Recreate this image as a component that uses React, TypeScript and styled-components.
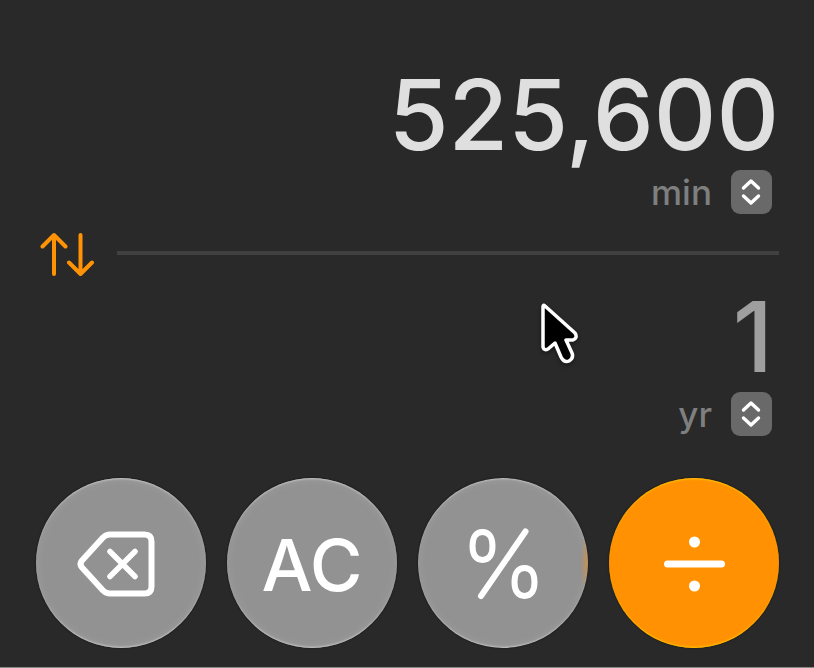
import React, { useState } from "react";
import styled, { createGlobalStyle, css } from "styled-components";

const GlobalStyle = createGlobalStyle`
  *, *::before, *::after {
    box-sizing: border-box;
  }

  body {
    margin: 0;
    background-color: #292929;
    font-family: Inter, "Liberation Sans", sans-serif;
  }
`;

const Calculator = styled.main`
  display: flex;
  flex-direction: column;
  min-height: 100vh;
  padding: 65px 35px 19px 36px;
  border-bottom: 1px solid #8a8a8a;
  background-color: #292929;
`;

const Panel = styled.section`
  position: relative;
  display: flex;
  flex-direction: column;
  align-items: flex-end;
  gap: 5px;
`;

const Value = styled.output<{ $dimmed?: boolean }>`
  font-size: 97px;
  font-weight: 500;
  line-height: 100px;
  color: ${({ $dimmed }) => ($dimmed ? "#9f9f9f" : "#dfdfdf")};
  padding-right: ${({ $dimmed }) => ($dimmed ? "6px" : "0")};
`;

const UnitPicker = styled.label`
  position: relative;
  display: flex;
  height: 44px;
  margin-right: 7px;
`;

const UnitSelect = styled.select`
  appearance: none;
  height: 44px;
  padding: 0 60px 0 0;
  border: none;
  background: transparent;
  color: #7f7f7f;
  font-family: inherit;
  font-size: 35px;
  font-weight: 500;
  line-height: 44px;
  text-align: right;
  cursor: pointer;
`;

const Stepper = styled.span`
  position: absolute;
  top: 0;
  right: 0;
  display: flex;
  align-items: center;
  justify-content: center;
  width: 41px;
  height: 44px;
  border-radius: 9px;
  background-color: #696969;
  pointer-events: none;
`;

const SwapRow = styled.div`
  display: flex;
  align-items: center;
  gap: 17px;
  height: 68px;
  margin-top: 5px;
`;

const SwapButton = styled.button`
  display: flex;
  padding: 0;
  border: none;
  background: none;
  color: #ff9305;
  cursor: pointer;
`;

const Divider = styled.hr`
  flex: 1;
  height: 4px;
  margin: 0;
  border: none;
  background-color: #404040;
`;

const Pointer = styled.svg`
  position: absolute;
  top: 13px;
  right: 194px;
  filter: drop-shadow(0 2px 2px rgba(0, 0, 0, 0.4));
`;

const Keypad = styled.div`
  display: grid;
  grid-template-columns: repeat(4, 1fr);
  gap: 21px;
  margin-top: 42px;
`;

const grayKey = css`
  background-color: #929292;
  box-shadow:
    inset 0 2px 2px -1px #c4c4c4,
    inset 0 -2px 2px -1px #c4c4c4,
    inset 0 0 12px rgba(255, 255, 255, 0.1),
    0 0 2px #111;
`;

const orangeKey = css`
  background-color: #ff9102;
  box-shadow:
    inset 0 2px 2px -1px #ffc400,
    inset 0 -2px 2px -1px #ffc400,
    0 0 2px #111;
`;

const Key = styled.button<{ $operator?: boolean; $glow?: boolean }>`
  display: flex;
  align-items: center;
  justify-content: center;
  aspect-ratio: 1;
  padding: 0;
  border: none;
  border-radius: 50%;
  color: #fff;
  font-family: inherit;
  font-size: 72px;
  font-weight: 500;
  line-height: 80px;
  cursor: pointer;
  ${({ $operator }) => ($operator ? orangeKey : grayKey)}
  ${({ $glow }) =>
    $glow &&
    css`
      background-image: radial-gradient(
        ellipse 8px 34px at 100% 50%,
        #c48b4c,
        transparent
      );
    `}
`;

const KeyText = styled.span`
  padding-top: 4px;
`;

const StepperIcon = () => (
  <svg width="22" height="28" viewBox="0 0 22 28" fill="none" stroke="#fff" strokeWidth="3.4" strokeLinecap="round" strokeLinejoin="round" aria-hidden="true">
    <path d="m2.500 10 7.500-7 7.500 7" />
    <path d="m2.500 18 7.500 7 7.500-7" />
  </svg>
);

const SwapIcon = () => (
  <svg width="64" height="48" viewBox="0 0 64 48" fill="none" stroke="currentColor" strokeWidth="4" strokeLinecap="round" strokeLinejoin="round" aria-hidden="true">
    <path d="M18 45V6M6.500 17.500 18 6l11.500 11.500" />
    <path d="M44.500 6v39M33 33.500 44.500 45 56 33.500" />
  </svg>
);

const DeleteIcon = () => (
  <svg width="92" height="72" viewBox="-4 0 92 72" fill="none" stroke="#fff" strokeLinecap="round" strokeLinejoin="round" aria-hidden="true">
    <path strokeWidth="6" d="M31 7.500h34.500q7 0 7 7v45q0 7-7 7H31q-4 0-7-3l-21-23q-3-3.500 0-7l21-23q3-3 7-3z" />
    <path strokeWidth="5.5" d="m31 24.500 25 25M56 24.500 31 49.500" />
  </svg>
);

const PercentIcon = () => (
  <svg width="72" height="74" viewBox="0 0 72 74" fill="none" stroke="#fff" strokeLinecap="round" strokeWidth="6" aria-hidden="true">
    <path d="M15.500 6c6.500 0 10 5 10 14s-3.500 14-10 14-10-5-10-14 3.500-14 10-14z" />
    <path d="M57.500 42c6.500 0 10 5 10 14s-3.500 14-10 14-10-5-10-14 3.500-14 10-14z" />
    <path d="M58.500 5.500 14 70" />
  </svg>
);

const DivideIcon = () => (
  <svg width="64" height="58" viewBox="0 0 64 58" fill="#fff" aria-hidden="true">
    <circle cx="32.500" cy="8" r="5.500" />
    <rect x="2" y="26.500" width="61" height="7" rx="3.500" />
    <circle cx="32.500" cy="52" r="5.500" />
  </svg>
);

interface UnitFieldProps {
  label: string;
  unit: string;
}

const UnitField: React.FC<UnitFieldProps> = ({ label, unit }) => (
  <UnitPicker>
    <UnitSelect aria-label={label} defaultValue={unit}>
      <option value={unit}>{unit}</option>
    </UnitSelect>
    <Stepper>
      <StepperIcon />
    </Stepper>
  </UnitPicker>
);

const App: React.FC = () => {
  const [fields, setFields] = useState([
    { value: "525,600", unit: "min" },
    { value: "1", unit: "yr" },
  ]);
  const [from, to] = fields;

  return (
    <>
      <GlobalStyle />
      <Calculator>
        <Panel>
          <Value>{from.value}</Value>
          <UnitField key={from.unit} label="From unit" unit={from.unit} />
        </Panel>
        <SwapRow>
          <SwapButton
            type="button"
            aria-label="Swap units"
            onClick={() => setFields([to, from])}
          >
            <SwapIcon />
          </SwapButton>
          <Divider />
        </SwapRow>
        <Panel>
          <Value $dimmed>{to.value}</Value>
          <UnitField key={to.unit} label="To unit" unit={to.unit} />
          <Pointer width="48" height="72" viewBox="0 0 48 72" aria-hidden="true">
            <path
              d="M6 7v40q1 4 5 2l7-6 6 14q3 6 8 4 5-3 3-8l-6-13h7q5-2 2-7L8 6q-2-2-2 1z"
              fill="#000"
              stroke="#fff"
              strokeWidth="3.5"
              strokeLinejoin="round"
            />
          </Pointer>
        </Panel>
        <Keypad>
          <Key type="button" aria-label="Delete">
            <DeleteIcon />
          </Key>
          <Key type="button">
            <KeyText>AC</KeyText>
          </Key>
          <Key type="button" aria-label="Percent" $glow>
            <PercentIcon />
          </Key>
          <Key type="button" aria-label="Divide" $operator>
            <DivideIcon />
          </Key>
        </Keypad>
      </Calculator>
    </>
  );
};

export default App;
